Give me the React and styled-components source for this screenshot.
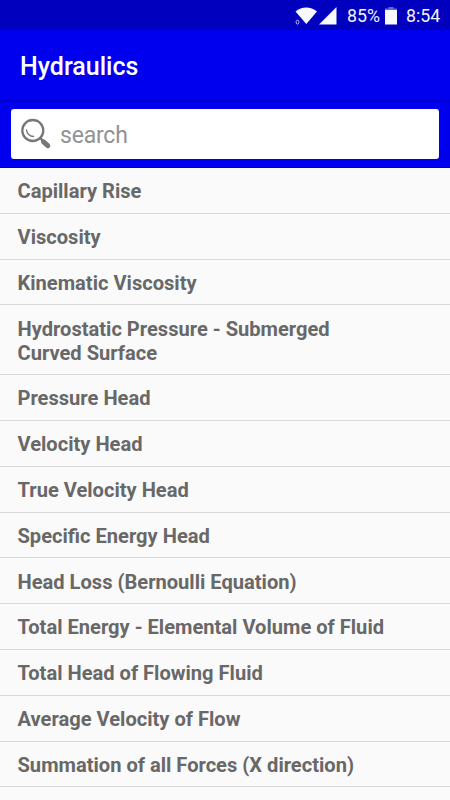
import React, { useState } from "react";
import styled, { createGlobalStyle } from "styled-components";

const FORMULAS = [
  "Capillary Rise",
  "Viscosity",
  "Kinematic Viscosity",
  "Hydrostatic Pressure - Submerged Curved Surface",
  "Pressure Head",
  "Velocity Head",
  "True Velocity Head",
  "Specific Energy Head",
  "Head Loss (Bernoulli Equation)",
  "Total Energy - Elemental Volume of Fluid",
  "Total Head of Flowing Fluid",
  "Average Velocity of Flow",
  "Summation of all Forces (X direction)",
];

const GlobalStyle = createGlobalStyle`
  * {
    margin: 0;
    padding: 0;
    box-sizing: border-box;
  }

  body {
    font-family: Roboto, sans-serif;
    background: #fafafa;
    overflow: hidden;
  }
`;

const Screen = styled.main`
  width: 450px;
  height: 800px;
  overflow: hidden;
  background: #fafafa;
`;

const StatusBar = styled.div`
  display: flex;
  align-items: center;
  justify-content: flex-end;
  height: 30px;
  padding: 2px 9px 0 0;
  background: #0000be;
  color: #f2f2ff;
  font-size: 17.8px;
  line-height: 28px;

  svg {
    display: block;
    flex: none;
  }
`;

const Battery = styled.span`
  width: 33px;
  margin: 0 5px 0 8px;
`;

const Clock = styled.span`
  width: 35px;
  margin-left: 9px;
  white-space: nowrap;
`;

const TitleBar = styled.header`
  display: flex;
  align-items: center;
  height: 70px;
  padding: 4px 20px 0;
  background: #0000ee;
  color: #ffffff;
`;

const Title = styled.h1`
  font-size: 25px;
  font-weight: 500;
  line-height: 32px;
`;

const SearchBar = styled.div`
  height: 68px;
  padding: 9px 11px;
  background: #0000ee;
  border-bottom: 1px solid #0000a8;
  box-shadow: inset 0 2px 2px -1px #0000c8;
`;

const SearchBox = styled.label`
  display: flex;
  align-items: center;
  height: 50px;
  padding-left: 9px;
  border-radius: 3px;
  background: #ffffff;
`;

const SearchInput = styled.input`
  flex: 1;
  min-width: 0;
  height: 50px;
  margin-left: 8px;
  padding-top: 3px;
  border: none;
  outline: none;
  background: transparent;
  color: #666666;
  font-family: inherit;
  font-size: 23px;
  letter-spacing: -0.2px;

  &::placeholder {
    color: #929292;
    opacity: 1;
  }
`;

const List = styled.ul`
  list-style: none;
`;

const Row = styled.li`
  padding: 12.35px 60px 8.5px 17.5px;
  border-bottom: 1px solid #d9d9d9;
  color: #686868;
  font-size: 20.1px;
  font-weight: 700;
  line-height: 23.95px;
`;

function SignalIcons() {
  return (
    <svg width="44" height="20" viewBox="0 0 44 20" fill="#f8f8ff">
      <path d="M.5 5.5C6.7.3 15.7.3 22 5.5L11.3 18Z" />
      <path d="M24 18.5L41.5 1V18.5Z" />
      <path
        d="M1.2 15.2L2.5 13.8L3.8 15.2V17L2.5 18.4L1.2 17Z"
        fill="none"
        stroke="#c8c8ff"
        strokeWidth=".9"
      />
    </svg>
  );
}

function BatteryIcon() {
  return (
    <svg width="12" height="18" viewBox="0 0 12 18">
      <path d="M3.5 0H8.5V1.5H12V3H0V1.5H3.5Z" fill="#6666dc" />
      <path d="M0 3H12V17.5H0Z" fill="#f8f8ff" />
    </svg>
  );
}

function SearchIcon() {
  return (
    <svg width="32" height="32" viewBox="0 0 32 32" fill="none" stroke="#777777">
      <circle cx="12.8" cy="12.5" r="10.5" strokeWidth="2.3" />
      <path
        d="M6.5 12C7 15.5 9.5 18 13.5 18.5C10.2 18.4 7 16 6.5 12Z"
        strokeWidth="1.4"
        strokeLinejoin="round"
      />
      <path d="M20.3 20.2L23.8 23.6" strokeWidth="2.4" />
      <path d="M23.5 23.8L27.8 27.7" strokeWidth="5" strokeLinecap="round" />
    </svg>
  );
}

export default function App() {
  const [query, setQuery] = useState("");

  const formulas = FORMULAS.filter((name) =>
    name.toLowerCase().includes(query.toLowerCase())
  );

  return (
    <Screen>
      <GlobalStyle />

      <StatusBar>
        <SignalIcons />
        <Battery>85%</Battery>
        <BatteryIcon />
        <Clock>8:54</Clock>
      </StatusBar>

      <TitleBar>
        <Title>Hydraulics</Title>
      </TitleBar>

      <SearchBar>
        <SearchBox>
          <SearchIcon />
          <SearchInput
            placeholder="search"
            value={query}
            onChange={(e) => setQuery(e.target.value)}
          />
        </SearchBox>
      </SearchBar>

      <List>
        {formulas.map((name) => (
          <Row key={name}>{name}</Row>
        ))}
      </List>
    </Screen>
  );
}
